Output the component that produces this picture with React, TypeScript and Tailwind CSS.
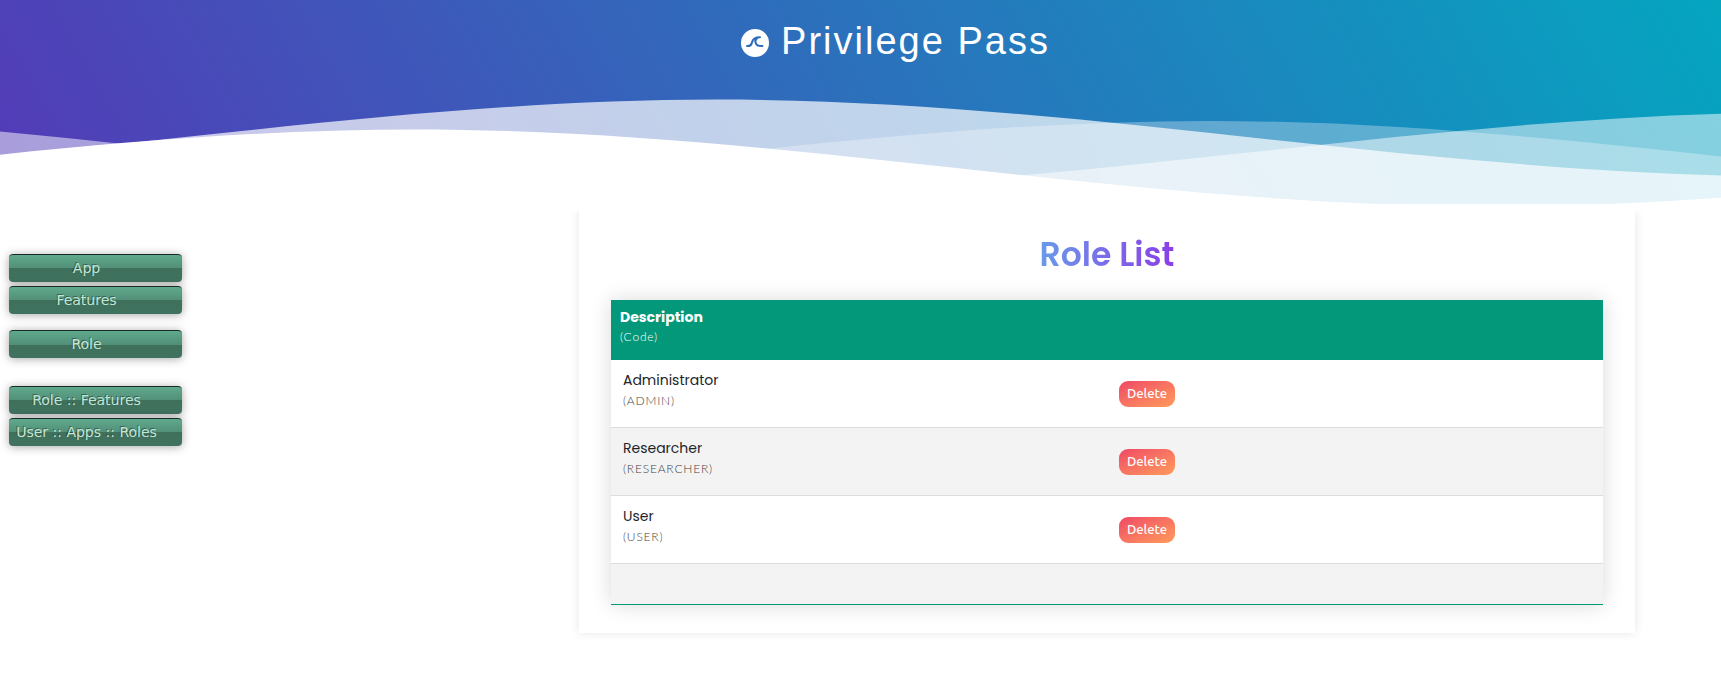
const WAVE = 'M-160 44c30 0 58-18 88-18s58 18 88 18 58-18 88-18 58 18 88 18v44h-352z';

const waves = [
  { x: -45.6, y: 0, fill: 'rgba(255,255,255,0.7)' },
  { x: 43.1, y: 3, fill: 'rgba(255,255,255,0.5)' },
  { x: -5.5, y: 5, fill: 'rgba(255,255,255,0.3)' },
  { x: 105.8, y: 7, fill: '#ffffff' },
];

const menu = [['App', 'Features'], ['Role'], ['Role :: Features', 'User :: Apps :: Roles']];
const groupSpacing = ['', 'mt-4', 'mt-7'];

const roles = [
  { name: 'Administrator', code: 'ADMIN' },
  { name: 'Researcher', code: 'RESEARCHER' },
  { name: 'User', code: 'USER' },
];

function Logo() {
  return (
    <svg viewBox="0 0 28 28" className="mt-1 size-7" aria-hidden="true">
      <circle cx="14" cy="14" r="14" fill="#fff" />
      <g fill="none" stroke="#2b6bbb" strokeWidth="2" strokeLinecap="round" strokeLinejoin="round">
        <path d="M6 17c3 .4 4.400-.8 5-3.800.8-3.400 2.800-5 8-5" />
        <path d="M16.200 9c-1.900 1.600-2.300 3.300-1.500 5.100.8 2 2.900 3.200 6.700 2.900" />
      </g>
    </svg>
  );
}

function Header() {
  return (
    <header className="overflow-hidden bg-[linear-gradient(60deg,#543ab7_0%,#00acc1_106%)] text-white">
      <div className="flex h-[91px] items-start justify-center pt-[18px] pl-[70px]">
        <div className="flex items-center gap-3">
          <Logo />
          <h1 className="font-['Liberation_Sans',sans-serif] text-[38px] leading-[46px] font-light tracking-[2px]">
            Privilege Pass
          </h1>
        </div>
      </div>
      <svg viewBox="0 24 140.26 26.45" preserveAspectRatio="none" className="block h-[113px] w-full" aria-hidden="true">
        {waves.map((w) => (
          <path key={w.y} d={WAVE} fill={w.fill} transform={`translate(${w.x} ${w.y})`} />
        ))}
      </svg>
    </header>
  );
}

function Menu() {
  return (
    <nav className="flex w-[173px] shrink-0 flex-col pt-[43px]">
      {menu.map((group, i) => (
        <div key={group[0]} className={`flex flex-col gap-1 ${groupSpacing[i]}`}>
          {group.map((label) => (
            <button
              key={label}
              type="button"
              className="h-7 rounded border-t border-[#1a2a24] bg-[linear-gradient(to_bottom,#60a98c_0%,#528f78_50%,#3e705c_50%,#40735f_100%)] pr-[18px] pb-0.5 text-center font-['DejaVu_Sans',sans-serif] text-sm leading-6 whitespace-nowrap text-[#c4e6d5] shadow-[0_1px_10px_rgba(0,0,0,0.35)] [text-shadow:-1px_-1px_0_rgba(0,0,0,0.35)]"
            >
              {label}
            </button>
          ))}
        </div>
      ))}
    </nav>
  );
}

function RoleTable() {
  return (
    <table className="w-full table-fixed border-separate border-spacing-0 text-left shadow-[0_0_20px_rgba(0,0,0,0.15)]">
      <thead>
        <tr className="h-[60px] bg-[#029879] text-white">
          <th className="px-[9px] pt-1.5 align-top" scope="col">
            <div className="text-sm leading-[22px] font-bold">Description</div>
            <div className="font-[Lato,sans-serif] text-xs leading-[18px] font-light tracking-[0.8px]">(Code)</div>
          </th>
          <td />
        </tr>
      </thead>
      <tbody>
        {roles.map((r) => (
          <tr key={r.code} className="h-[68px] even:bg-[#f3f3f3]">
            <td className="border-b border-[#dddddd] px-3 pt-2.5 align-top">
              <div className="text-sm leading-[21px] text-[#212529]">{r.name}</div>
              <div className="font-[Lato,sans-serif] text-xs leading-[19px] font-light tracking-[0.8px] text-[#444444]">({r.code})</div>
            </td>
            <td className="border-b border-[#dddddd] px-3 align-middle">
              <button
                type="button"
                aria-label={`Delete ${r.name}`}
                className="block h-[26px] w-14 rounded-[9px] bg-linear-to-br from-[#ef4765] to-[#ff9a5a] text-center font-[Ubuntu,'Noto_Sans',sans-serif] text-[13px] font-medium text-white"
              >
                Delete
              </button>
            </td>
          </tr>
        ))}
        <tr className="h-[41px] bg-[#f3f3f3]">
          <td colSpan={2} className="border-b border-[#009879]" />
        </tr>
      </tbody>
    </table>
  );
}

export default function App() {
  return (
    <div className="min-h-screen bg-white font-[Poppins,Inter,sans-serif]">
      <Header />
      <div className="flex items-start justify-between pt-[7px] pr-[5%] pb-8 pl-[9px]">
        <Menu />
        <main className="w-[65%] max-w-[1056px] bg-white px-8 pb-7 shadow-[0_0_10px_rgba(0,0,0,0.1)] [clip-path:inset(0_-20px_-20px_-20px)]">
          <div className="flex h-[89px] items-center justify-center pb-0.5">
            <h2 className="bg-[linear-gradient(to_right,#6a9ae9,#8a3ee8)] bg-clip-text text-[33px] leading-10 font-semibold text-transparent">
              Role List
            </h2>
          </div>
          <RoleTable />
        </main>
      </div>
    </div>
  );
}
